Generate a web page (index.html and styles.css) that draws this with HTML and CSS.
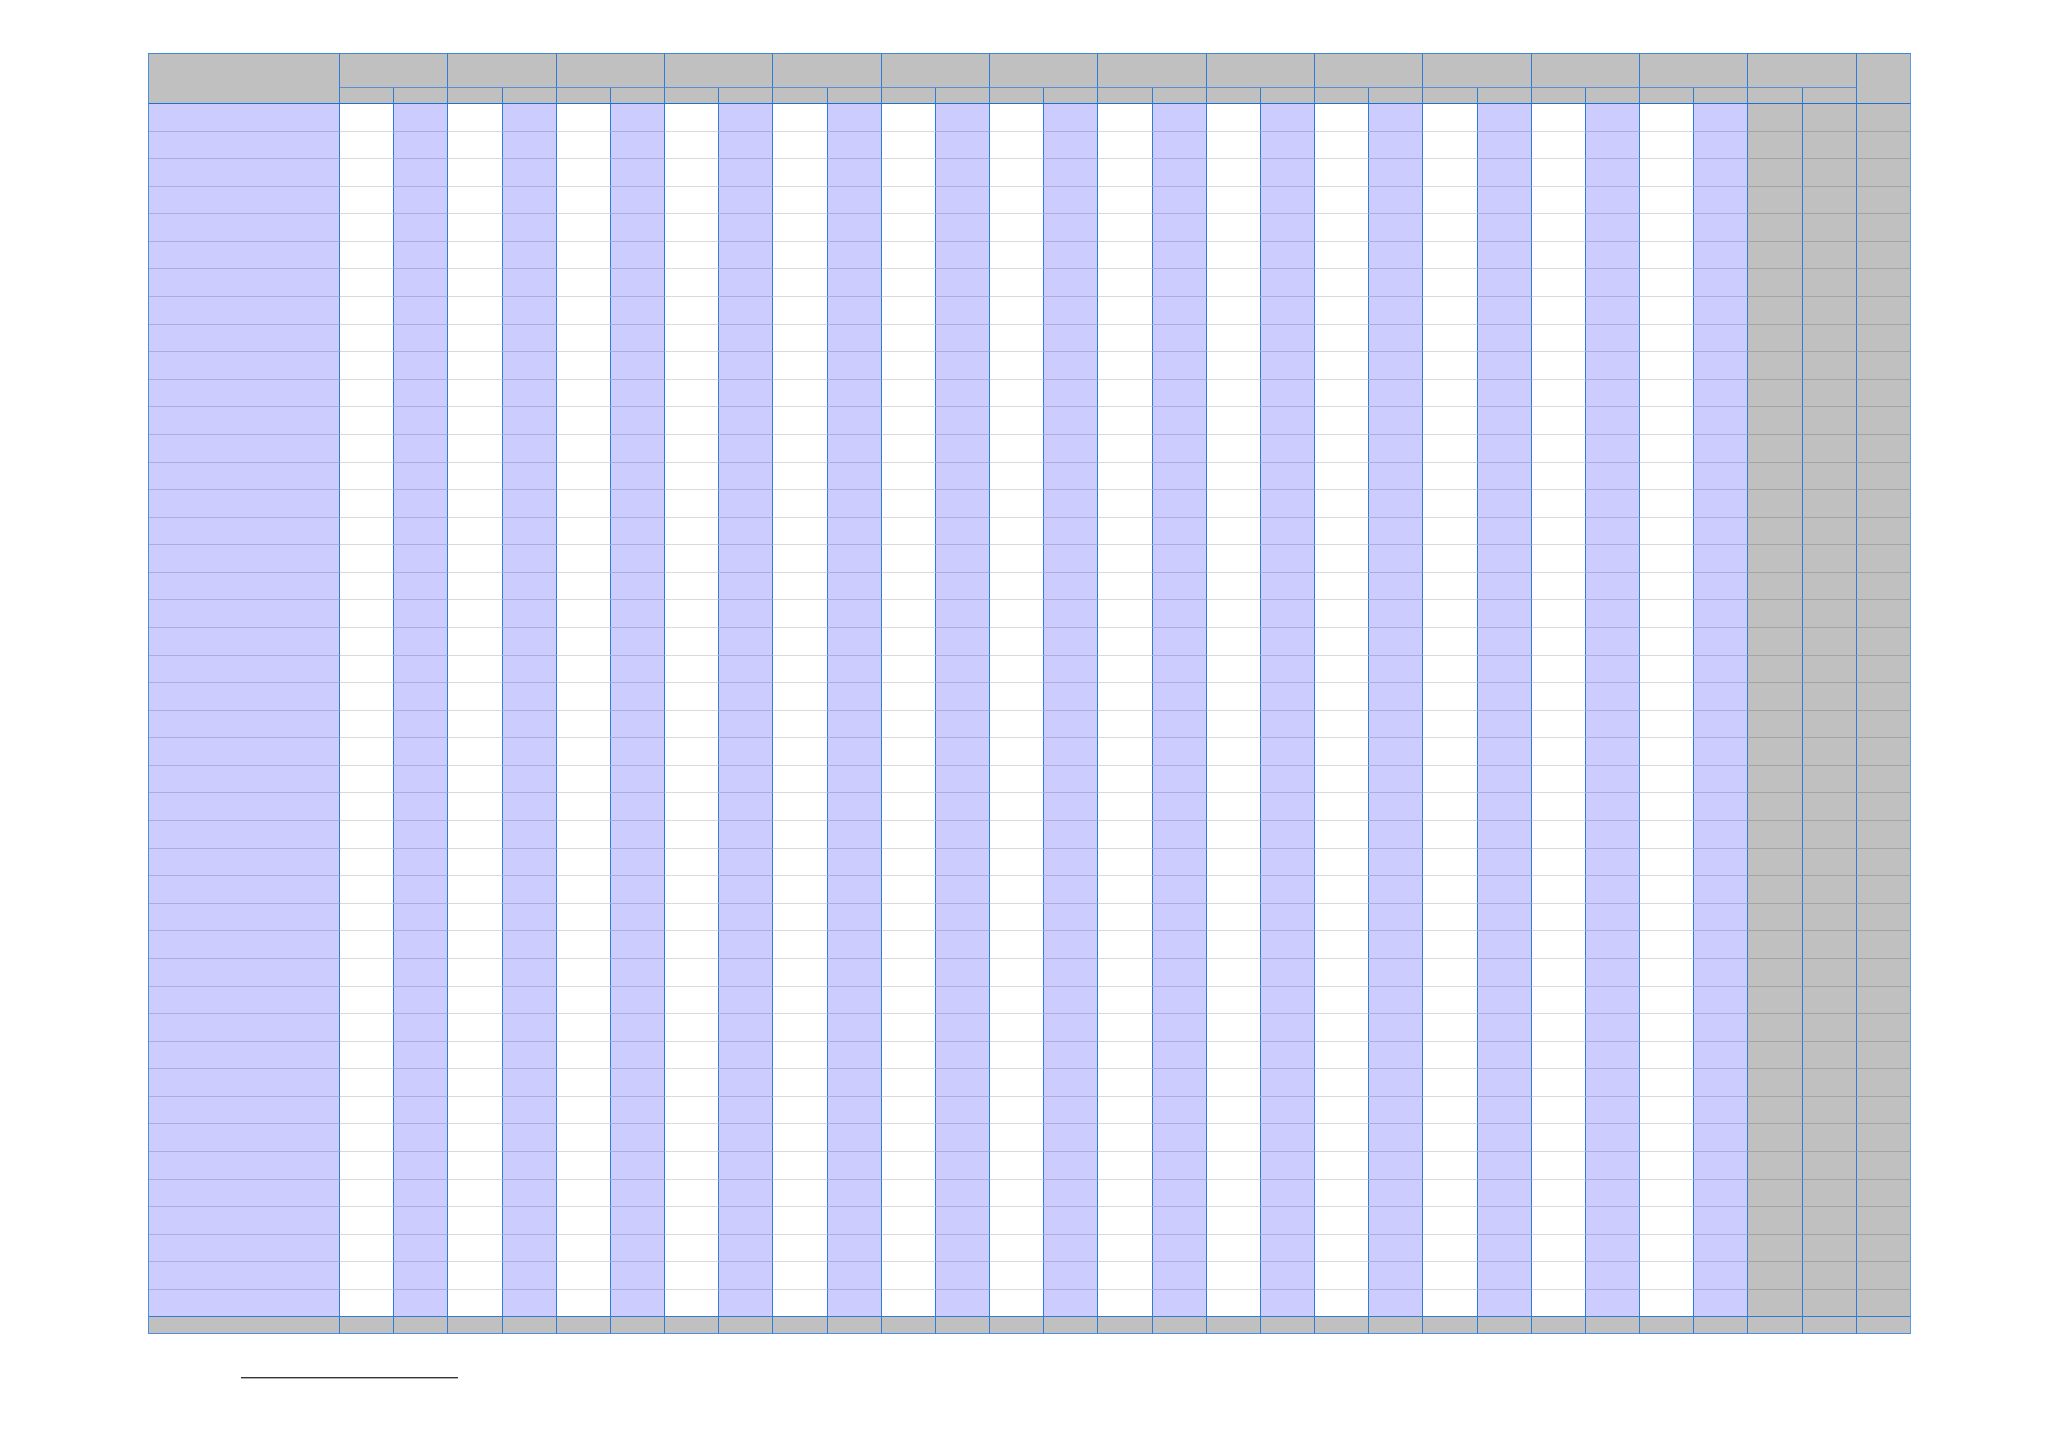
FILE: index.html
```html
<!DOCTYPE html>
<html lang="en">
<head>
<meta charset="utf-8">
<title>Grid sheet</title>
<link rel="stylesheet" href="styles.css">
</head>
<body>
<main class="page">
<table class="sheet">
<colgroup><col class="c-name"></colgroup>
<thead>
<tr class="h1"><th rowspan="2"></th><th colspan="2"></th><th colspan="2"></th><th colspan="2"></th><th colspan="2"></th><th colspan="2"></th><th colspan="2"></th><th colspan="2"></th><th colspan="2"></th><th colspan="2"></th><th colspan="2"></th><th colspan="2"></th><th colspan="2"></th><th colspan="2"></th><th colspan="2"></th><th rowspan="2" class="last"></th></tr>
<tr class="h2">
<th></th><th></th><th></th><th></th><th></th><th></th><th></th><th></th><th></th><th></th>
<th></th><th></th><th></th><th></th><th></th><th></th><th></th><th></th><th></th><th></th>
<th></th><th></th><th></th><th></th><th></th><th></th><th></th><th></th>
</tr>
</thead>
<tbody>
<tr><td></td><td></td><td></td><td></td><td></td><td></td><td></td><td></td><td></td><td></td><td></td><td></td><td></td><td></td><td></td><td></td><td></td><td></td><td></td><td></td><td></td><td></td><td></td><td></td><td></td><td></td><td></td><td></td><td></td><td></td></tr>
<tr><td></td><td></td><td></td><td></td><td></td><td></td><td></td><td></td><td></td><td></td><td></td><td></td><td></td><td></td><td></td><td></td><td></td><td></td><td></td><td></td><td></td><td></td><td></td><td></td><td></td><td></td><td></td><td></td><td></td><td></td></tr>
<tr><td></td><td></td><td></td><td></td><td></td><td></td><td></td><td></td><td></td><td></td><td></td><td></td><td></td><td></td><td></td><td></td><td></td><td></td><td></td><td></td><td></td><td></td><td></td><td></td><td></td><td></td><td></td><td></td><td></td><td></td></tr>
<tr><td></td><td></td><td></td><td></td><td></td><td></td><td></td><td></td><td></td><td></td><td></td><td></td><td></td><td></td><td></td><td></td><td></td><td></td><td></td><td></td><td></td><td></td><td></td><td></td><td></td><td></td><td></td><td></td><td></td><td></td></tr>
<tr><td></td><td></td><td></td><td></td><td></td><td></td><td></td><td></td><td></td><td></td><td></td><td></td><td></td><td></td><td></td><td></td><td></td><td></td><td></td><td></td><td></td><td></td><td></td><td></td><td></td><td></td><td></td><td></td><td></td><td></td></tr>
<tr><td></td><td></td><td></td><td></td><td></td><td></td><td></td><td></td><td></td><td></td><td></td><td></td><td></td><td></td><td></td><td></td><td></td><td></td><td></td><td></td><td></td><td></td><td></td><td></td><td></td><td></td><td></td><td></td><td></td><td></td></tr>
<tr><td></td><td></td><td></td><td></td><td></td><td></td><td></td><td></td><td></td><td></td><td></td><td></td><td></td><td></td><td></td><td></td><td></td><td></td><td></td><td></td><td></td><td></td><td></td><td></td><td></td><td></td><td></td><td></td><td></td><td></td></tr>
<tr><td></td><td></td><td></td><td></td><td></td><td></td><td></td><td></td><td></td><td></td><td></td><td></td><td></td><td></td><td></td><td></td><td></td><td></td><td></td><td></td><td></td><td></td><td></td><td></td><td></td><td></td><td></td><td></td><td></td><td></td></tr>
<tr><td></td><td></td><td></td><td></td><td></td><td></td><td></td><td></td><td></td><td></td><td></td><td></td><td></td><td></td><td></td><td></td><td></td><td></td><td></td><td></td><td></td><td></td><td></td><td></td><td></td><td></td><td></td><td></td><td></td><td></td></tr>
<tr><td></td><td></td><td></td><td></td><td></td><td></td><td></td><td></td><td></td><td></td><td></td><td></td><td></td><td></td><td></td><td></td><td></td><td></td><td></td><td></td><td></td><td></td><td></td><td></td><td></td><td></td><td></td><td></td><td></td><td></td></tr>
<tr><td></td><td></td><td></td><td></td><td></td><td></td><td></td><td></td><td></td><td></td><td></td><td></td><td></td><td></td><td></td><td></td><td></td><td></td><td></td><td></td><td></td><td></td><td></td><td></td><td></td><td></td><td></td><td></td><td></td><td></td></tr>
<tr><td></td><td></td><td></td><td></td><td></td><td></td><td></td><td></td><td></td><td></td><td></td><td></td><td></td><td></td><td></td><td></td><td></td><td></td><td></td><td></td><td></td><td></td><td></td><td></td><td></td><td></td><td></td><td></td><td></td><td></td></tr>
<tr><td></td><td></td><td></td><td></td><td></td><td></td><td></td><td></td><td></td><td></td><td></td><td></td><td></td><td></td><td></td><td></td><td></td><td></td><td></td><td></td><td></td><td></td><td></td><td></td><td></td><td></td><td></td><td></td><td></td><td></td></tr>
<tr><td></td><td></td><td></td><td></td><td></td><td></td><td></td><td></td><td></td><td></td><td></td><td></td><td></td><td></td><td></td><td></td><td></td><td></td><td></td><td></td><td></td><td></td><td></td><td></td><td></td><td></td><td></td><td></td><td></td><td></td></tr>
<tr><td></td><td></td><td></td><td></td><td></td><td></td><td></td><td></td><td></td><td></td><td></td><td></td><td></td><td></td><td></td><td></td><td></td><td></td><td></td><td></td><td></td><td></td><td></td><td></td><td></td><td></td><td></td><td></td><td></td><td></td></tr>
<tr><td></td><td></td><td></td><td></td><td></td><td></td><td></td><td></td><td></td><td></td><td></td><td></td><td></td><td></td><td></td><td></td><td></td><td></td><td></td><td></td><td></td><td></td><td></td><td></td><td></td><td></td><td></td><td></td><td></td><td></td></tr>
<tr><td></td><td></td><td></td><td></td><td></td><td></td><td></td><td></td><td></td><td></td><td></td><td></td><td></td><td></td><td></td><td></td><td></td><td></td><td></td><td></td><td></td><td></td><td></td><td></td><td></td><td></td><td></td><td></td><td></td><td></td></tr>
<tr><td></td><td></td><td></td><td></td><td></td><td></td><td></td><td></td><td></td><td></td><td></td><td></td><td></td><td></td><td></td><td></td><td></td><td></td><td></td><td></td><td></td><td></td><td></td><td></td><td></td><td></td><td></td><td></td><td></td><td></td></tr>
<tr><td></td><td></td><td></td><td></td><td></td><td></td><td></td><td></td><td></td><td></td><td></td><td></td><td></td><td></td><td></td><td></td><td></td><td></td><td></td><td></td><td></td><td></td><td></td><td></td><td></td><td></td><td></td><td></td><td></td><td></td></tr>
<tr><td></td><td></td><td></td><td></td><td></td><td></td><td></td><td></td><td></td><td></td><td></td><td></td><td></td><td></td><td></td><td></td><td></td><td></td><td></td><td></td><td></td><td></td><td></td><td></td><td></td><td></td><td></td><td></td><td></td><td></td></tr>
<tr><td></td><td></td><td></td><td></td><td></td><td></td><td></td><td></td><td></td><td></td><td></td><td></td><td></td><td></td><td></td><td></td><td></td><td></td><td></td><td></td><td></td><td></td><td></td><td></td><td></td><td></td><td></td><td></td><td></td><td></td></tr>
<tr><td></td><td></td><td></td><td></td><td></td><td></td><td></td><td></td><td></td><td></td><td></td><td></td><td></td><td></td><td></td><td></td><td></td><td></td><td></td><td></td><td></td><td></td><td></td><td></td><td></td><td></td><td></td><td></td><td></td><td></td></tr>
<tr><td></td><td></td><td></td><td></td><td></td><td></td><td></td><td></td><td></td><td></td><td></td><td></td><td></td><td></td><td></td><td></td><td></td><td></td><td></td><td></td><td></td><td></td><td></td><td></td><td></td><td></td><td></td><td></td><td></td><td></td></tr>
<tr><td></td><td></td><td></td><td></td><td></td><td></td><td></td><td></td><td></td><td></td><td></td><td></td><td></td><td></td><td></td><td></td><td></td><td></td><td></td><td></td><td></td><td></td><td></td><td></td><td></td><td></td><td></td><td></td><td></td><td></td></tr>
<tr><td></td><td></td><td></td><td></td><td></td><td></td><td></td><td></td><td></td><td></td><td></td><td></td><td></td><td></td><td></td><td></td><td></td><td></td><td></td><td></td><td></td><td></td><td></td><td></td><td></td><td></td><td></td><td></td><td></td><td></td></tr>
<tr><td></td><td></td><td></td><td></td><td></td><td></td><td></td><td></td><td></td><td></td><td></td><td></td><td></td><td></td><td></td><td></td><td></td><td></td><td></td><td></td><td></td><td></td><td></td><td></td><td></td><td></td><td></td><td></td><td></td><td></td></tr>
<tr><td></td><td></td><td></td><td></td><td></td><td></td><td></td><td></td><td></td><td></td><td></td><td></td><td></td><td></td><td></td><td></td><td></td><td></td><td></td><td></td><td></td><td></td><td></td><td></td><td></td><td></td><td></td><td></td><td></td><td></td></tr>
<tr><td></td><td></td><td></td><td></td><td></td><td></td><td></td><td></td><td></td><td></td><td></td><td></td><td></td><td></td><td></td><td></td><td></td><td></td><td></td><td></td><td></td><td></td><td></td><td></td><td></td><td></td><td></td><td></td><td></td><td></td></tr>
<tr><td></td><td></td><td></td><td></td><td></td><td></td><td></td><td></td><td></td><td></td><td></td><td></td><td></td><td></td><td></td><td></td><td></td><td></td><td></td><td></td><td></td><td></td><td></td><td></td><td></td><td></td><td></td><td></td><td></td><td></td></tr>
<tr><td></td><td></td><td></td><td></td><td></td><td></td><td></td><td></td><td></td><td></td><td></td><td></td><td></td><td></td><td></td><td></td><td></td><td></td><td></td><td></td><td></td><td></td><td></td><td></td><td></td><td></td><td></td><td></td><td></td><td></td></tr>
<tr><td></td><td></td><td></td><td></td><td></td><td></td><td></td><td></td><td></td><td></td><td></td><td></td><td></td><td></td><td></td><td></td><td></td><td></td><td></td><td></td><td></td><td></td><td></td><td></td><td></td><td></td><td></td><td></td><td></td><td></td></tr>
<tr><td></td><td></td><td></td><td></td><td></td><td></td><td></td><td></td><td></td><td></td><td></td><td></td><td></td><td></td><td></td><td></td><td></td><td></td><td></td><td></td><td></td><td></td><td></td><td></td><td></td><td></td><td></td><td></td><td></td><td></td></tr>
<tr><td></td><td></td><td></td><td></td><td></td><td></td><td></td><td></td><td></td><td></td><td></td><td></td><td></td><td></td><td></td><td></td><td></td><td></td><td></td><td></td><td></td><td></td><td></td><td></td><td></td><td></td><td></td><td></td><td></td><td></td></tr>
<tr><td></td><td></td><td></td><td></td><td></td><td></td><td></td><td></td><td></td><td></td><td></td><td></td><td></td><td></td><td></td><td></td><td></td><td></td><td></td><td></td><td></td><td></td><td></td><td></td><td></td><td></td><td></td><td></td><td></td><td></td></tr>
<tr><td></td><td></td><td></td><td></td><td></td><td></td><td></td><td></td><td></td><td></td><td></td><td></td><td></td><td></td><td></td><td></td><td></td><td></td><td></td><td></td><td></td><td></td><td></td><td></td><td></td><td></td><td></td><td></td><td></td><td></td></tr>
<tr><td></td><td></td><td></td><td></td><td></td><td></td><td></td><td></td><td></td><td></td><td></td><td></td><td></td><td></td><td></td><td></td><td></td><td></td><td></td><td></td><td></td><td></td><td></td><td></td><td></td><td></td><td></td><td></td><td></td><td></td></tr>
<tr><td></td><td></td><td></td><td></td><td></td><td></td><td></td><td></td><td></td><td></td><td></td><td></td><td></td><td></td><td></td><td></td><td></td><td></td><td></td><td></td><td></td><td></td><td></td><td></td><td></td><td></td><td></td><td></td><td></td><td></td></tr>
<tr><td></td><td></td><td></td><td></td><td></td><td></td><td></td><td></td><td></td><td></td><td></td><td></td><td></td><td></td><td></td><td></td><td></td><td></td><td></td><td></td><td></td><td></td><td></td><td></td><td></td><td></td><td></td><td></td><td></td><td></td></tr>
<tr><td></td><td></td><td></td><td></td><td></td><td></td><td></td><td></td><td></td><td></td><td></td><td></td><td></td><td></td><td></td><td></td><td></td><td></td><td></td><td></td><td></td><td></td><td></td><td></td><td></td><td></td><td></td><td></td><td></td><td></td></tr>
<tr><td></td><td></td><td></td><td></td><td></td><td></td><td></td><td></td><td></td><td></td><td></td><td></td><td></td><td></td><td></td><td></td><td></td><td></td><td></td><td></td><td></td><td></td><td></td><td></td><td></td><td></td><td></td><td></td><td></td><td></td></tr>
<tr><td></td><td></td><td></td><td></td><td></td><td></td><td></td><td></td><td></td><td></td><td></td><td></td><td></td><td></td><td></td><td></td><td></td><td></td><td></td><td></td><td></td><td></td><td></td><td></td><td></td><td></td><td></td><td></td><td></td><td></td></tr>
<tr><td></td><td></td><td></td><td></td><td></td><td></td><td></td><td></td><td></td><td></td><td></td><td></td><td></td><td></td><td></td><td></td><td></td><td></td><td></td><td></td><td></td><td></td><td></td><td></td><td></td><td></td><td></td><td></td><td></td><td></td></tr>
<tr><td></td><td></td><td></td><td></td><td></td><td></td><td></td><td></td><td></td><td></td><td></td><td></td><td></td><td></td><td></td><td></td><td></td><td></td><td></td><td></td><td></td><td></td><td></td><td></td><td></td><td></td><td></td><td></td><td></td><td></td></tr>
<tr><td></td><td></td><td></td><td></td><td></td><td></td><td></td><td></td><td></td><td></td><td></td><td></td><td></td><td></td><td></td><td></td><td></td><td></td><td></td><td></td><td></td><td></td><td></td><td></td><td></td><td></td><td></td><td></td><td></td><td></td></tr>
</tbody>
<tfoot>
<tr><td></td><td></td><td></td><td></td><td></td><td></td><td></td><td></td><td></td><td></td><td></td><td></td><td></td><td></td><td></td><td></td><td></td><td></td><td></td><td></td><td></td><td></td><td></td><td></td><td></td><td></td><td></td><td></td><td></td><td></td></tr>
</tfoot>
</table>
<div class="signature"></div>
</main>
</body>
</html>
```

FILE: styles.css
```css
html, body {
  margin: 0;
  padding: 0;
  background: #ffffff;
  font-family: "Liberation Sans", Arial, sans-serif;
}

.page {
  padding: 53px 0 0 148px;
}

.sheet {
  table-layout: fixed;
  width: 1763px;
  border-collapse: separate;
  border-spacing: 0;
  border-left: 1px solid #4a8ede;
  border-top: 1px solid #3f86d8;
}

.c-name {
  width: 191px;
}

.sheet th,
.sheet td {
  padding: 0;
  box-sizing: border-box;
  border-right: 1px solid #2f7bd6;
}

.sheet th {
  background: #c0c0c0;
  border-bottom: 1px solid #1f6fd0;
}

.sheet .h1 {
  height: 34px;
}

.sheet .h1 th[colspan] {
  border-bottom: 1px solid #5b8fcb;
}

.sheet .h2 {
  height: 16px;
}

.sheet tbody tr {
  height: 27.59px;
}

.sheet tbody td {
  background: #ccccff;
  border-bottom: 1px solid rgba(0, 0, 0, 0.15);
}

.sheet tbody td:nth-child(even) {
  background: #ffffff;
}

.sheet tbody td:nth-child(n+28) {
  background: #c0c0c0;
}

.sheet tbody tr:last-child td {
  border-bottom: 1px solid #2f7bd6;
}

.sheet tfoot tr {
  height: 17px;
}

.sheet tfoot td {
  background: #c0c0c0;
  border-bottom: 1px solid #4a8ede;
}

.sheet td:last-child,
.sheet th.last {
  border-right-color: #5c9be0;
}

.signature {
  width: 217px;
  margin: 43px 0 0 93px;
  border-top: 1px solid #333333;
  border-bottom: 1px solid #b0b0b0;
}
```
